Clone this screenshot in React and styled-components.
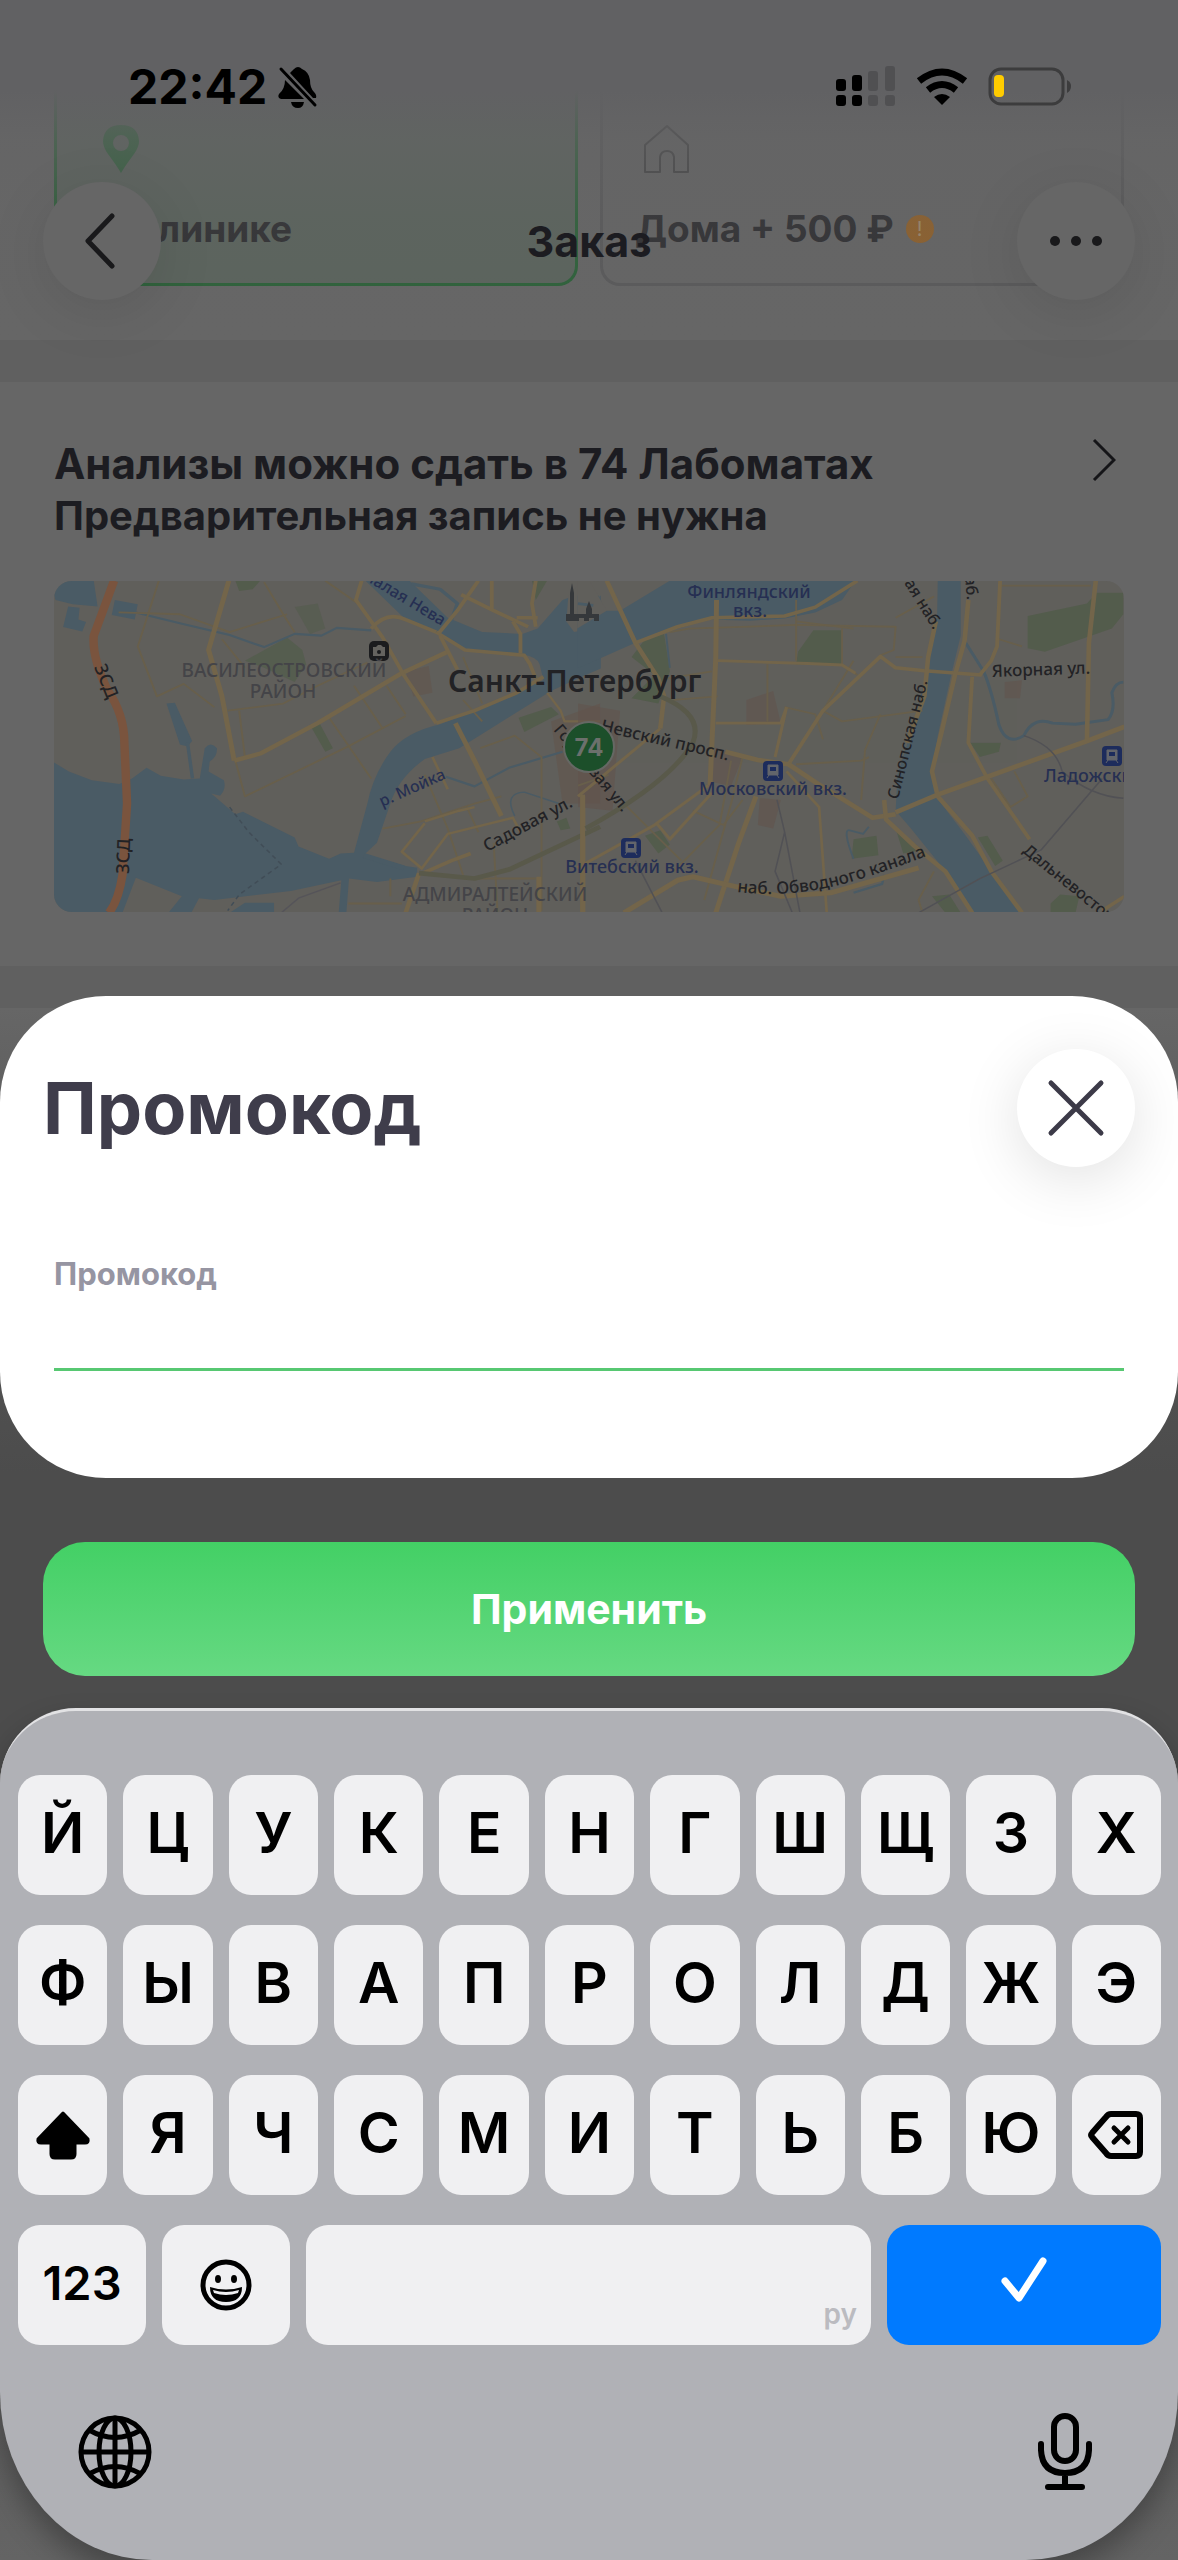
/**
 * Promo code sheet shown over the order screen,
 * together with the system keyboard.
 */

import React, { useState } from "react";
import styled, { createGlobalStyle } from "styled-components";

const KEY_ROWS = [
  ["Й", "Ц", "У", "К", "Е", "Н", "Г", "Ш", "Щ", "З", "Х"],
  ["Ф", "Ы", "В", "А", "П", "Р", "О", "Л", "Д", "Ж", "Э"],
  ["shift", "Я", "Ч", "С", "М", "И", "Т", "Ь", "Б", "Ю", "delete"],
];

const GlobalStyle = createGlobalStyle`
  * {
    box-sizing: border-box;
  }

  body {
    margin: 0;
    background: #666666;
    font-family: Inter, "Liberation Sans", sans-serif;
  }

  button, input {
    font-family: inherit;
    border: none;
    margin: 0;
    padding: 0;
  }

  svg {
    display: block;
    flex: none;
  }
`;

const BellOff = () => (
  <svg width="40" height="44" viewBox="0 0 40 44">
    <path d="M12 8 Q15 5 16 4 Q20 0 24 4 Q31 7 32 15 Q32 23 36 27 Q39 30 38 33 L35 33 Z" />
    <path d="M7 15 L26 34 H3 Q-1 33 1 29 Q7 24 7 15Z" />
    <path d="M13 37 H26 Q25 43 20 43 Q14 43 13 37Z" />
    <path d="M3 4 L37 40" stroke="#000" strokeWidth="3" strokeLinecap="round" />
  </svg>
);

const Signal = () => (
  <svg width="60" height="42" viewBox="0 0 60 42">
    <rect x="0" y="13" width="10" height="12" rx="3" />
    <rect x="16" y="9" width="10" height="16" rx="3" />
    <rect x="0" y="29" width="10" height="11" rx="3" />
    <rect x="16" y="29" width="10" height="11" rx="3" />
    <g fill="#505052">
      <rect x="32" y="5" width="10" height="20" rx="3" />
      <rect x="49" y="0" width="10" height="25" rx="3" />
      <rect x="32" y="29" width="10" height="11" rx="3" />
      <rect x="49" y="29" width="10" height="11" rx="3" />
    </g>
  </svg>
);

const Wifi = () => (
  <svg width="52" height="38" viewBox="0 0 52 38">
    <g fill="none" stroke="#000" strokeWidth="7">
      <path d="M3 13 Q26 -5 49 13" />
      <path d="M12 22 Q26 11 40 22" />
    </g>
    <path d="M18 29 Q26 23 34 29 L26 37Z" />
  </svg>
);

const Battery = () => (
  <svg width="84" height="40" viewBox="0 0 84 40">
    <rect x="2" y="2" width="73" height="35" rx="11" fill="none" stroke="#3c3c3d" strokeWidth="3" />
    <rect x="6" y="8" width="10" height="22" rx="4" fill="#ffcc00" />
    <path d="M79 13 Q83 15 83 19 Q83 24 79 26Z" fill="#3c3c3d" />
  </svg>
);

const Train = ({ x, y }) => (
  <g transform={`translate(${x - 10} ${y - 10})`}>
    <rect width="20" height="20" rx="4" fill="#1d2c5c" />
    <path d="M5 4 H15 V14 H5Z M6 14 L4 17 M14 14 L16 17" fill="#62656b" stroke="#62656b" strokeWidth="1" />
    <rect x="7" y="6" width="6" height="4" fill="#1d2c5c" />
  </g>
);

const MapPicture = () => (
  <MapSvg viewBox="0 0 1070 331" preserveAspectRatio="xMidYMid slice" role="img" aria-label="Карта">
    <rect width="1070" height="331" fill="#605f5b" />

    {/* west half */}
    <g transform="matrix(0.3827 0 0 0.3571 -54 -181)" fill="none" strokeLinejoin="round">
      <g fill="#535c4c">
        <path d="M615 506 H680 L660 530 L625 535Z" />
        <path d="M640 730 L750 665 L790 700 L800 740 L770 790 L690 750Z" opacity=".8" />
        <path d="M770 580 L830 570 L850 640 L810 655Z" opacity=".6" />
        <path d="M810 910 L835 905 L870 975 L850 985Z" />
        <path d="M1355 890 L1440 860 L1460 880 L1370 930Z" />
        <path d="M1390 505 H1430 L1400 560Z" />
        <path d="M1455 1180 L1480 1170 L1490 1200 L1465 1205Z" />
      </g>
      <g fill="#62574f" opacity=".7">
        <path d="M1060 760 L1120 745 L1130 820 L1080 830Z" />
        <path d="M1440 900 L1568 850 V1130 L1470 1130Z" />
      </g>
      <g fill="#4a5b65">
        <path d="M141 545 Q150 506 175 506 H245 L255 578 L190 572 L145 560Z" />
        <path d="M178 578 L208 582 L205 615 L225 622 L215 648 L165 636Z" />
        <path d="M300 560 L360 572 L352 615 L292 602Z" />
        <path d="M435 850 L457 848 L502 955 L490 970 L470 965Z" />
        <path d="M141 1015 L180 1040 L240 1065 L312 1075 L345 1060 L383 1030 L420 1052 L480 1063 L522 1060 L535 975 Q550 955 567 975 Q568 1000 548 1012 L545 1040 L585 1065 Q592 1090 575 1108 L552 1102 L615 1160 L635 1153 L770 1225 L780 1250 L860 1285 L890 1270 L925 1268 L960 1130 Q975 1050 1020 985 Q1060 930 1150 908 L1240 870 L1345 820 L1420 785 L1410 740 Q1405 720 1365 712 L1210 700 L1145 652 L1060 615 L955 506 H1070 L1170 610 L1260 650 L1365 655 L1405 640 L1470 560 L1500 548 H1570 V752 L1520 775 L1440 815 L1290 915 L1200 975 L1110 1005 Q1040 1060 1020 1130 L985 1240 L950 1275 L1060 1305 L1090 1310 V1335 L985 1350 L912 1340 L905 1436 H885 L892 1345 L760 1375 L560 1400 L520 1395 L500 1436 H440 L475 1390 L355 1338 L320 1436 H141Z" />
        <path d="M600 1436 L640 1408 H716 V1436Z" />
      </g>
      <path d="M1485 548 L1510 518 L1568 506 V635 L1500 650 L1480 620Z" fill="#605f5b" />
      <g stroke="#4a5b65" strokeWidth="9">
        <path d="M355 595 L470 625 L600 658 L690 692 L770 655 L840 660 L880 638 L970 645" strokeWidth="6" />
        <path d="M490 960 L503 1060" />
        <path d="M1075 515 L1150 530 L1195 570 L1180 615" />
        <path d="M950 1275 L1055 1310" strokeWidth="14" />
        <path d="M1165 1055 L1240 1082 L1330 1030 L1470 985" strokeWidth="6" />
        <path d="M1345 1165 Q1315 1100 1370 1098 L1460 1130" strokeWidth="4" />
      </g>
      <g stroke="#685f4b" strokeWidth="5">
        <path d="M415 506 L360 690 L410 830 L480 795 L560 860" />
        <path d="M310 595 L470 600 L600 650 L750 600" />
        <path d="M690 510 L740 600 L770 650" />
        <path d="M850 506 L935 570" />
        <path d="M580 670 L640 750 M625 870 L640 1000 M595 870 L740 850 L830 800 L960 735" />
        <path d="M615 1010 L640 1110 L910 970 L1060 885" />
        <path d="M860 890 L970 1060 M925 800 L1000 920 M1010 800 L1060 880" />
        <path d="M1210 840 L1260 900 M1210 720 L1260 850" />
        <path d="M1255 975 L1345 940 L1415 1000 L1415 1430" />
        <path d="M1000 1200 L1100 1180 L1240 1130 L1310 1110" />
        <path d="M1110 1050 L1170 1200 L1210 1330 M1220 1140 L1250 1210 M1290 1240 L1300 1436" />
        <path d="M1020 1340 V1390 M910 1410 H1050 M1210 1340 H1400" />
      </g>
      <g stroke="#73654a" strokeWidth="10">
        <path d="M598 506 L545 700 L580 830 L612 1010" strokeWidth="13" />
        <path d="M612 1010 L680 990 L830 905 L1050 765 L1170 705" strokeWidth="12" />
        <path d="M945 506 L930 560 L1000 665 L1055 770 L1140 905" />
        <path d="M970 640 Q1010 590 1060 615 L1140 650" />
        <path d="M1140 650 L1215 700 L1370 715 L1385 740 L1400 780" />
        <path d="M1145 655 L1195 590 L1250 506" />
        <path d="M1150 660 L1195 755" />
        <path d="M1205 545 L1290 590 L1380 635 M1285 506 V590 M1350 610 H1405 M1400 506 L1390 570 L1400 635" />
        <path d="M1360 710 V655 L1340 620" />
        <path d="M1140 905 L1240 870 L1350 820 L1420 775" />
        <path d="M1190 905 L1240 1010 L1310 1165" strokeWidth="13" />
        <path d="M1130 1000 L1170 1090 M1110 1180 L1200 1150 L1240 1140" strokeWidth="7" />
        <path d="M1100 1310 L1050 1265 L1110 1185 M1100 1315 L1170 1215 L1340 1170 L1360 1210" strokeWidth="7" />
        <path d="M1105 1325 L1180 1290 L1230 1270" />
        <path d="M1095 1325 L1060 1436" strokeWidth="12" />
        <path d="M1408 1335 V1436 M1523 1110 V1436" strokeWidth="13" />
        <path d="M1430 820 L1465 870 L1475 900 L1568 900" strokeWidth="6" />
      </g>
      <path d="M1095 1325 L1240 1340 L1330 1315 L1568 1195" stroke="#59594a" strokeWidth="13" />
      <path d="M298 506 L245 660 Q240 720 280 810 Q325 880 325 960 L332 1130 L320 1330 Q310 1400 285 1436" stroke="#7a543e" strokeWidth="22" />
      <path d="M600 1140 L650 1210 L735 1300 L625 1385 L595 1430" stroke="#414d57" strokeWidth="4" strokeDasharray="12 10" />
      <path d="M735 1436 L780 1395 L890 1352" stroke="#555459" strokeWidth="4" />
    </g>

    {/* east half */}
    <g transform="matrix(0.3827 0 0 0.3571 524 -181)" fill="none" strokeLinejoin="round">
      <g fill="#535c4c">
        <path d="M175 670 L225 655 L240 760 L210 850 L140 835 L200 770 L140 720Z" />
        <path d="M615 645 H690 V740 H570 L575 705Z" />
        <path d="M1175 605 L1330 570 L1355 540 H1425 V600 L1395 640 L1220 705 L1175 695Z" />
        <path d="M1025 960 H1105 L1100 985 L1050 1000Z" />
        <path d="M175 1220 L215 1205 L240 1245 L210 1270Z" />
        <path d="M720 1230 L780 1220 L785 1275 L715 1285Z" />
        <path d="M830 1200 L900 1260 L850 1270Z M1045 1225 L1070 1220 L1110 1290 L1090 1305Z" />
        <path d="M925 1390 L970 1385 L1000 1436 H960Z M1235 1410 L1260 1385 L1310 1390 L1300 1436 H1235Z" />
      </g>
      <g fill="#62544d" opacity=".6">
        <path d="M440 840 L510 815 L530 905 L440 910Z M350 970 L430 1000 L400 1080 L350 1070Z" />
        <path d="M1115 790 L1160 785 L1155 835 L1115 835Z M475 1115 L530 1120 L510 1200 L470 1190Z" />
        <path d="M0 850 L110 870 L90 1150 L0 1140Z" />
      </g>
      <g fill="#4a5b65">
        <path d="M-2 548 L55 548 L70 590 L110 590 L240 506 H725 L690 560 L620 595 L540 612 L450 618 L340 615 L260 640 L150 680 L-2 752Z" />
        <path d="M940 506 H1000 L1000 660 L975 770 L940 940 L925 1040 L935 1110 L1010 1215 L1080 1320 L1165 1436 H1030 L960 1320 L870 1200 L830 1150 L835 1050 L870 930 L905 790 L920 700 L938 620Z" />
      </g>
      <path d="M-2 506 L30 506 L75 590 L-2 640Z" fill="#605f5b" />
      <g stroke="#4a5b65" strokeWidth="8">
        <path d="M1010 675 L1060 760 Q1080 810 1100 910 Q1120 970 1165 940 Q1190 885 1240 905 L1300 908 L1385 895 Q1405 870 1395 820 Q1405 790 1425 790" />
        <path d="M230 655 L240 750 M720 1285 Q690 1200 710 1205 L745 1215 L760 1195" strokeWidth="5" />
        <path d="M720 1380 L795 1355 L800 1330" strokeWidth="6" />
        <path d="M0 570 L40 575" />
      </g>
      <g stroke="#685f4b" strokeWidth="5">
        <path d="M240 650 L290 640 L570 630 L830 635 L825 700 L790 715" />
        <path d="M570 560 V730 M690 640 V740 L730 770 M495 740 V900 M365 830 L250 840 M230 780 L350 760" />
        <path d="M570 620 L720 640 M830 610 L930 550 M720 730 L640 870 L690 900 L900 870" />
        <path d="M790 880 L750 980 L740 1120 M570 1020 L740 1010 L760 1000" />
        <path d="M740 770 L790 720 M830 720 H900" />
        <path d="M540 860 L620 880 L640 950" />
        <path d="M430 1000 L400 1130 L330 1400 M120 1130 L270 1290 M0 1080 L80 1050" />
        <path d="M300 1150 L380 1190 L430 1120 M400 1010 L370 1190 L250 1320" />
        <path d="M1080 1060 L1130 1140 L1175 1110 L1140 1040 M1100 520 H1340" />
        <path d="M1100 670 L1160 690 M930 1320 L890 1400 L900 1436" />
      </g>
      <g stroke="#73654a" strokeWidth="10">
        <path d="M75 506 L150 680 L210 780 L225 830 L215 920" strokeWidth="12" />
        <path d="M362 560 L360 720 L350 960 L345 1080" strokeWidth="13" />
        <path d="M150 680 L260 635 L350 610 L540 605 L620 580 L730 506" />
        <path d="M365 730 L600 738 L690 742 L725 765" strokeWidth="8" />
        <path d="M360 905 H530 L545 860 M515 1000 L545 860" strokeWidth="8" />
        <path d="M550 1020 L640 870 L790 718 L830 750 L905 758 L1055 770" />
        <path d="M385 985 L470 1008 L550 1020 L620 1070 L770 1170 L830 1160" strokeWidth="13" />
        <path d="M545 1040 L630 1140 L650 1436" strokeWidth="7" />
        <path d="M465 1110 L420 1240 L360 1436" strokeWidth="13" />
        <path d="M350 1100 L240 1230 L205 1185 M215 920 L0 1110 M340 1080 L200 1190 L50 1280 L-2 1310" strokeWidth="8" />
        <path d="M12 1105 V1436" strokeWidth="13" />
        <path d="M120 1436 L260 1345 L300 1335 L380 1355 L530 1390 L660 1380 L890 1310" strokeWidth="14" />
        <path d="M935 620 L915 720 L905 830 L860 960 M800 1120 L805 1175 L880 1250 L960 1320 L1030 1436" strokeWidth="12" />
        <path d="M1020 560 L1010 675 L985 770 L950 930 L925 1040 L940 1110 L1030 1220 L1080 1320 L1160 1436" strokeWidth="12" />
        <path d="M1103 506 L1095 690 L1080 730 L1050 770 M1030 775 L1020 960 L1070 1060 L1180 1230" />
        <path d="M1353 506 L1335 680 L1330 950" strokeWidth="12" />
        <path d="M830 1155 L940 1105 L1070 1055 L1330 955 L1428 915" strokeWidth="13" />
        <path d="M1370 1430 L1428 1390" />
      </g>
      <path d="M215 830 Q330 880 300 960 Q240 1070 20 1200" stroke="#59594a" strokeWidth="13" />
      <g stroke="#515155" strokeWidth="4">
        <path d="M520 1120 L540 1210 L580 1436 M540 1210 L515 1320 L560 1436 M150 1290 L220 1436" />
        <path d="M1370 1060 L1210 1260 L1050 1340 L890 1436 M1165 940 Q1250 970 1265 1040 M1265 1040 Q1340 1110 1425 1115" />
      </g>
    </g>

    {/* landmarks */}
    <rect x="315" y="60" width="20" height="20" rx="5" fill="#1b1c1e" />
    <path d="M319 66 H322 L324 64 H327 L329 66 H331 V75 H319Z" fill="#64635f" />
    <circle cx="325" cy="71" r="2" fill="#1b1c1e" />
    <path d="M512 40 V33 H516 V12 L518 2 L520 12 V33 H532 V28 L535 20 L538 28 V33 H545 V40 H540 V37 H535 V40 H530 V37 H525 V40Z" fill="#35383b" />

    <g fontFamily="'Noto Sans', 'Open Sans', sans-serif" fontSize="18" fontWeight="500" fill="#222225">
      <g fill="#444448" fontSize="19" textAnchor="middle">
        <text x="230" y="96">ВАСИЛЕОСТРОВСКИЙ</text>
        <text x="229" y="117">РАЙОН</text>
        <text x="441" y="320">АДМИРАЛТЕЙСКИЙ</text>
        <text x="441" y="341">РАЙОН</text>
      </g>
      <g fill="#262f52">
        <text transform="translate(306 -4) rotate(31)" fontSize="16">Малая Нева</text>
        <text transform="translate(328 226) rotate(-24)" fontSize="16">р. Мойка</text>
        <g textAnchor="middle">
          <text x="695" y="17">Финляндский</text>
          <text x="696" y="36">вкз.</text>
          <text x="719" y="214">Московский вкз.</text>
          <text x="578" y="292">Витебский вкз.</text>
        </g>
        <text x="990" y="201">Ладожский вкз.</text>
      </g>
      <text x="394" y="111" fontSize="30" fontWeight="600">Санкт-Петербург</text>
      <text transform="translate(40 86) rotate(68)">ЗСД</text>
      <text transform="translate(75 293) rotate(-88)">ЗСД</text>
      <text transform="translate(433 271) rotate(-28)" fontSize="17">Садовая ул.</text>
      <text transform="translate(499 149) rotate(50)" fontSize="16">Гороховая ул.</text>
      <text transform="translate(546 150) rotate(13)" fontSize="17">Невский просп.</text>
      <text transform="translate(938 96) rotate(-2)" fontSize="17">Якорная ул.</text>
      <text transform="translate(844 219) rotate(-76)" fontSize="16">Синопская наб.</text>
      <text transform="translate(850 2) rotate(58)" fontSize="16">ая наб.</text>
      <text transform="translate(911 -4) rotate(85)" fontSize="16">аб.</text>
      <path id="canal" d="M683 311 Q740 318 800 300 Q840 288 880 272" fill="none" />
      <text fontSize="17"><textPath href="#canal">наб. Обводного канала</textPath></text>
      <text transform="translate(968 271) rotate(39)" fontSize="16">Дальневосточный</text>
    </g>
    <Train x={719} y={190} />
    <Train x={577} y={267} />
    <Train x={1058} y={175} />

    <circle cx="535" cy="166" r="25" fill="#1c4f2a" stroke="#656864" strokeWidth="2" />
    <text x="535" y="175" textAnchor="middle" fontFamily="Inter, sans-serif" fontSize="24" fontWeight="700" fill="#6c706c">
      74
    </text>
  </MapSvg>
);

const ShiftIcon = () => (
  <svg width="56" height="50" viewBox="0 0 56 50">
    <path
      d="M28 3 L53 29 Q54 33 50 33 H40 V44 Q40 48 36 48 H20 Q16 48 16 44 V33 H6 Q2 33 3 29Z"
      stroke="#000"
      strokeWidth="3"
      strokeLinejoin="round"
    />
  </svg>
);

const DeleteIcon = () => (
  <svg width="56" height="50" viewBox="0 0 56 50" fill="none" stroke="#000" strokeWidth="6" strokeLinecap="round" strokeLinejoin="round">
    <path d="M23 4 H48 Q52 4 52 8 V42 Q52 46 48 46 H23 Q20 46 18 43 L4 27 Q2 25 4 23 L18 7 Q20 4 23 4Z" />
    <path d="M26 18 L40 32 M40 18 L26 32" strokeWidth="5" />
  </svg>
);

const SmileIcon = () => (
  <svg width="52" height="52" viewBox="0 0 52 52">
    <circle cx="26" cy="26" r="23" fill="none" stroke="#000" strokeWidth="5" />
    <ellipse cx="18" cy="20" rx="3" ry="4" />
    <ellipse cx="34" cy="20" rx="3" ry="4" />
    <path d="M10 28 Q26 33 42 28 Q42 43 26 43 Q10 43 10 28Z" />
    <path d="M13 31 Q26 35 39 31 L38 34 Q26 38 14 34Z" fill="#f0f0f2" />
  </svg>
);

const GlobeIcon = () => (
  <svg width="74" height="74" viewBox="0 0 74 74" fill="none" stroke="#000" strokeWidth="5">
    <circle cx="37" cy="37" r="34" />
    <ellipse cx="37" cy="37" rx="16" ry="34" />
    <path d="M37 2 V72 M2 37 H72" />
    <path d="M11 15 Q37 30 63 15 M11 59 Q37 44 63 59" />
  </svg>
);

const MicIcon = () => (
  <svg width="56" height="80" viewBox="0 0 56 80" fill="none" stroke="#000" strokeWidth="6" strokeLinecap="round">
    <rect x="17" y="4" width="22" height="45" rx="11" />
    <path d="M4 32 V38 Q5 61 28 61 Q51 61 52 38 V32 M28 61 V75 M11 75 H45" />
  </svg>
);

function Keyboard({ onType, onDelete }) {
  const renderKey = (name) => {
    if (name === "shift") {
      return (
        <Key key={name} type="button" aria-label="Shift">
          <ShiftIcon />
        </Key>
      );
    }
    if (name === "delete") {
      return (
        <Key key={name} type="button" aria-label="Удалить" onClick={onDelete}>
          <DeleteIcon />
        </Key>
      );
    }
    return (
      <Key key={name} type="button" $letter onClick={() => onType(name)}>
        {name}
      </Key>
    );
  };

  return (
    <KeyboardPanel>
      {KEY_ROWS.map((row, i) => (
        <KeyRow key={i}>{row.map(renderKey)}</KeyRow>
      ))}
      <BottomRow>
        <Key type="button" $small>123</Key>
        <Key type="button" aria-label="Эмодзи">
          <SmileIcon />
        </Key>
        <SpaceKey type="button" onClick={() => onType(" ")}>ру</SpaceKey>
        <Key type="submit" $primary aria-label="Готово">
          <svg width="46" height="46" viewBox="0 0 46 46" fill="none" stroke="#fff" strokeWidth="7" strokeLinecap="round" strokeLinejoin="round">
            <path d="M4 24 L18 41 L42 4" />
          </svg>
        </Key>
      </BottomRow>
      <KeyboardFooter>
        <PlainButton type="button" aria-label="Сменить язык">
          <GlobeIcon />
        </PlainButton>
        <PlainButton type="button" aria-label="Диктовка">
          <MicIcon />
        </PlainButton>
      </KeyboardFooter>
    </KeyboardPanel>
  );
}

export default function App() {
  const [code, setCode] = useState("");

  return (
    <Screen>
      <GlobalStyle />
      <OrderPage>
        <Choices>
          <Choice type="button" $active>
            <svg width="36" height="50" viewBox="0 0 36 50">
              <path d="M18 49 Q14 42 5 30 Q0 23 0 17 Q1 1 18 1 Q35 1 36 17 Q36 23 31 30 Q22 42 18 49Z M18 11 A8 8 0 1 0 18 27 A8 8 0 1 0 18 11Z" fill="#2c6239" fillRule="evenodd" />
            </svg>
            <ChoiceName>В клинике</ChoiceName>
          </Choice>
          <Choice type="button">
            <svg width="58" height="50" viewBox="0 0 58 50" fill="none" stroke="#414142" strokeWidth="2" strokeLinejoin="round">
              <path d="M32 2 L53 21 V48 H39 V33 Q38 27 32 27 Q26 27 25 33 V48 H10 V21Z" />
            </svg>
            <ChoiceName>
              Дома + 500 ₽ <Badge>!</Badge>
            </ChoiceName>
          </Choice>
        </Choices>
        <Divider />
        <Labs>
          <LabsLink href="#labs">
            <div>
              <LabsTitle>Анализы можно сдать в 74 Лабоматах</LabsTitle>
              <LabsNote>Предварительная запись не нужна</LabsNote>
            </div>
            <svg width="24" height="44" viewBox="0 0 24 44" fill="none" stroke="#151518" strokeWidth="3">
              <path d="M2 2 L22 22 L2 42" />
            </svg>
          </LabsLink>
          <MapPicture />
        </Labs>
        <Divider />
        <PageRest />
      </OrderPage>

      <Header>
        <StatusBar>
          <Clock>
            22:42
            <BellOff />
          </Clock>
          <StatusIcons>
            <Signal />
            <Wifi />
            <Battery />
          </StatusIcons>
        </StatusBar>
        <NavBar>
          <RoundButton type="button" $dim aria-label="Назад">
            <svg width="118" height="118" viewBox="0 0 118 118" fill="none" stroke="#19191b" strokeWidth="5" strokeLinecap="round" strokeLinejoin="round">
              <path d="M69 34 L45 59 L69 84" />
            </svg>
          </RoundButton>
          <NavTitle>Заказ</NavTitle>
          <RoundButton type="button" $dim aria-label="Меню">
            <svg width="64" height="12" viewBox="0 0 64 12" fill="#19191b">
              <circle cx="11" cy="6" r="5" />
              <circle cx="32" cy="6" r="5" />
              <circle cx="53" cy="6" r="5" />
            </svg>
          </RoundButton>
        </NavBar>
      </Header>

      <PromoForm onSubmit={(e) => e.preventDefault()}>
        <Sheet>
          <SheetHead>
            <SheetTitle>Промокод</SheetTitle>
            <RoundButton type="button" aria-label="Закрыть">
              <svg width="60" height="60" viewBox="0 0 60 60" fill="none" stroke="#3c3a48" strokeWidth="5" strokeLinecap="round">
                <path d="M5 5 L55 55 M55 5 L5 55" />
              </svg>
            </RoundButton>
          </SheetHead>
          <Field>
            <FieldLabel htmlFor="promo">Промокод</FieldLabel>
            <FieldInput id="promo" value={code} onChange={(e) => setCode(e.target.value)} />
          </Field>
        </Sheet>
        <ApplyButton type="submit">Применить</ApplyButton>
        <Keyboard onType={(s) => setCode(code + s)} onDelete={() => setCode(code.slice(0, -1))} />
      </PromoForm>
    </Screen>
  );
}

/* the page, its header and the sheet are stacked in one grid cell */
const Screen = styled.div`
  display: grid;
  grid-template-columns: minmax(0, 1fr);
  min-height: 100vh;
  overflow: hidden;

  & > * {
    grid-area: 1 / 1;
  }
`;

const OrderPage = styled.main`
  display: flex;
  flex-direction: column;
`;

const Choices = styled.div`
  display: grid;
  grid-template-columns: 1fr 1fr;
  gap: 22px;
  padding: 0 54px 54px;
`;

const ChoiceName = styled.span`
  display: flex;
  align-items: center;
  gap: 12px;
  font-size: 37px;
  line-height: 54px;
  font-weight: 700;
  color: #2e2e31;
`;

const Choice = styled.button`
  display: flex;
  flex-direction: column;
  gap: 28px;
  height: 286px;
  padding: 124px 32px 0 ${(props) => (props.$active ? "46px" : "32px")};
  border: 3px solid ${(props) => (props.$active ? "#2c6239" : "#5a5a5b")};
  border-top: none;
  border-radius: 0 0 20px 20px;
  background: ${(props) => (props.$active ? "#5b645d" : "#656565")};
  text-align: left;
`;

const Badge = styled.span`
  width: 28px;
  height: 28px;
  border-radius: 50%;
  background: #91612a;
  color: #a08b6d;
  font-size: 20px;
  line-height: 28px;
  font-weight: 400;
  text-align: center;
`;

const Divider = styled.div`
  height: 42px;
  background: #606060;
`;

const Labs = styled.section`
  padding: 56px 54px 54px;
  background: #666666;
`;

const LabsLink = styled.a`
  display: flex;
  justify-content: space-between;
  padding-right: 8px;
  color: #1c1c21;
  text-decoration: none;
`;

const LabsTitle = styled.h2`
  margin: 0;
  font-size: 42px;
  line-height: 52px;
  font-weight: 700;
`;

const LabsNote = styled.p`
  margin: 0 0 39px;
  font-size: 40px;
  line-height: 52px;
  font-weight: 700;
`;

const MapSvg = styled.svg`
  width: 100%;
  height: 331px;
  border-radius: 18px;
`;

const PageRest = styled.div`
  flex: 1;
  background: linear-gradient(#666666 0%, #545454 18%, #4c4c4c 30%, #4c4c4c 60%, #646464 100%);
`;

const Header = styled.header`
  align-self: start;
  padding-bottom: 40px;
  background: linear-gradient(#616163 0%, #616163 90px, rgba(100, 100, 101, 0.6) 140px, rgba(100, 100, 101, 0.2) 220px, rgba(100, 100, 101, 0) 100%);
`;

const StatusBar = styled.div`
  display: flex;
  align-items: center;
  justify-content: space-between;
  height: 182px;
  padding: 0 106px 8px 128px;
`;

const Clock = styled.div`
  display: flex;
  align-items: center;
  gap: 11px;
  font-size: 48px;
  line-height: 58px;
  font-weight: 700;
`;

const StatusIcons = styled.div`
  display: flex;
  align-items: center;
  gap: 20px;
`;

const NavBar = styled.nav`
  display: flex;
  align-items: center;
  justify-content: space-between;
  padding: 0 43px;
`;

const NavTitle = styled.h1`
  margin: 0;
  font-size: 43px;
  line-height: 52px;
  font-weight: 700;
  color: #1c1c21;
`;

const RoundButton = styled.button`
  display: flex;
  align-items: center;
  justify-content: center;
  flex: none;
  width: 118px;
  height: 118px;
  border-radius: 50%;
  background: ${(props) => (props.$dim ? "#666666" : "#ffffff")};
  box-shadow: 0 12px 60px ${(props) => (props.$dim ? "rgba(0, 0, 0, 0.1)" : "rgba(0, 0, 0, 0.12)")};
`;

const PromoForm = styled.form`
  display: flex;
  flex-direction: column;
  align-self: end;
`;

const Sheet = styled.section`
  padding: 53px 43px 107px;
  border-radius: 106px;
  background: #ffffff;
  overflow: hidden;
`;

const SheetHead = styled.div`
  display: flex;
  align-items: center;
  justify-content: space-between;
`;

const SheetTitle = styled.h2`
  margin: 0;
  font-size: 72px;
  line-height: 88px;
  font-weight: 700;
  color: #3f3d4b;
`;

const Field = styled.div`
  display: flex;
  flex-direction: column;
  padding: 87px 11px 0;
`;

const FieldLabel = styled.label`
  font-size: 31px;
  line-height: 40px;
  font-weight: 700;
  color: #9695a2;
`;

const FieldInput = styled.input`
  width: 100%;
  height: 77px;
  border-bottom: 3px solid #57c872;
  background: transparent;
  font-size: 41px;
  color: #3f3d4b;
  outline: none;
`;

const ApplyButton = styled.button`
  height: 134px;
  margin: 64px 43px 32px;
  border-radius: 42px;
  background: linear-gradient(#43d065, #66d982);
  color: #ffffff;
  font-size: 41px;
  font-weight: 700;
`;

const KeyboardPanel = styled.div`
  display: flex;
  flex-direction: column;
  gap: 30px;
  padding: 64px 17px 68px 18px;
  border-top: 3px solid #e2e2e4;
  border-radius: 76px 76px 152px 152px / 76px 76px 168px 168px;
  background: #b0b1b6;
  box-shadow: 0 16px 30px rgba(0, 0, 0, 0.3);
`;

const KeyRow = styled.div`
  display: grid;
  grid-template-columns: repeat(11, 1fr);
  gap: 16px;
`;

const BottomRow = styled.div`
  display: grid;
  grid-template-columns: 128px 128px 1fr 274px;
  gap: 16px;
`;

const Key = styled.button`
  display: flex;
  align-items: center;
  justify-content: center;
  height: 120px;
  padding-bottom: ${(props) => (props.$primary ? "10px" : props.$letter || props.$small ? "6px" : "0")};
  border-radius: 22px;
  background: ${(props) => (props.$primary ? "#007aff" : "#f0f0f2")};
  color: #000000;
  font-size: ${(props) => (props.$small ? "47px" : "57px")};
  font-weight: 600;
`;

const SpaceKey = styled(Key)`
  align-items: flex-end;
  justify-content: flex-end;
  padding: 0 14px 14px;
  color: #bbbbc0;
  font-size: 28px;
`;

const KeyboardFooter = styled.div`
  display: flex;
  align-items: center;
  justify-content: space-between;
  padding: 37px 68px 0 60px;
`;

const PlainButton = styled.button`
  background: none;
`;
